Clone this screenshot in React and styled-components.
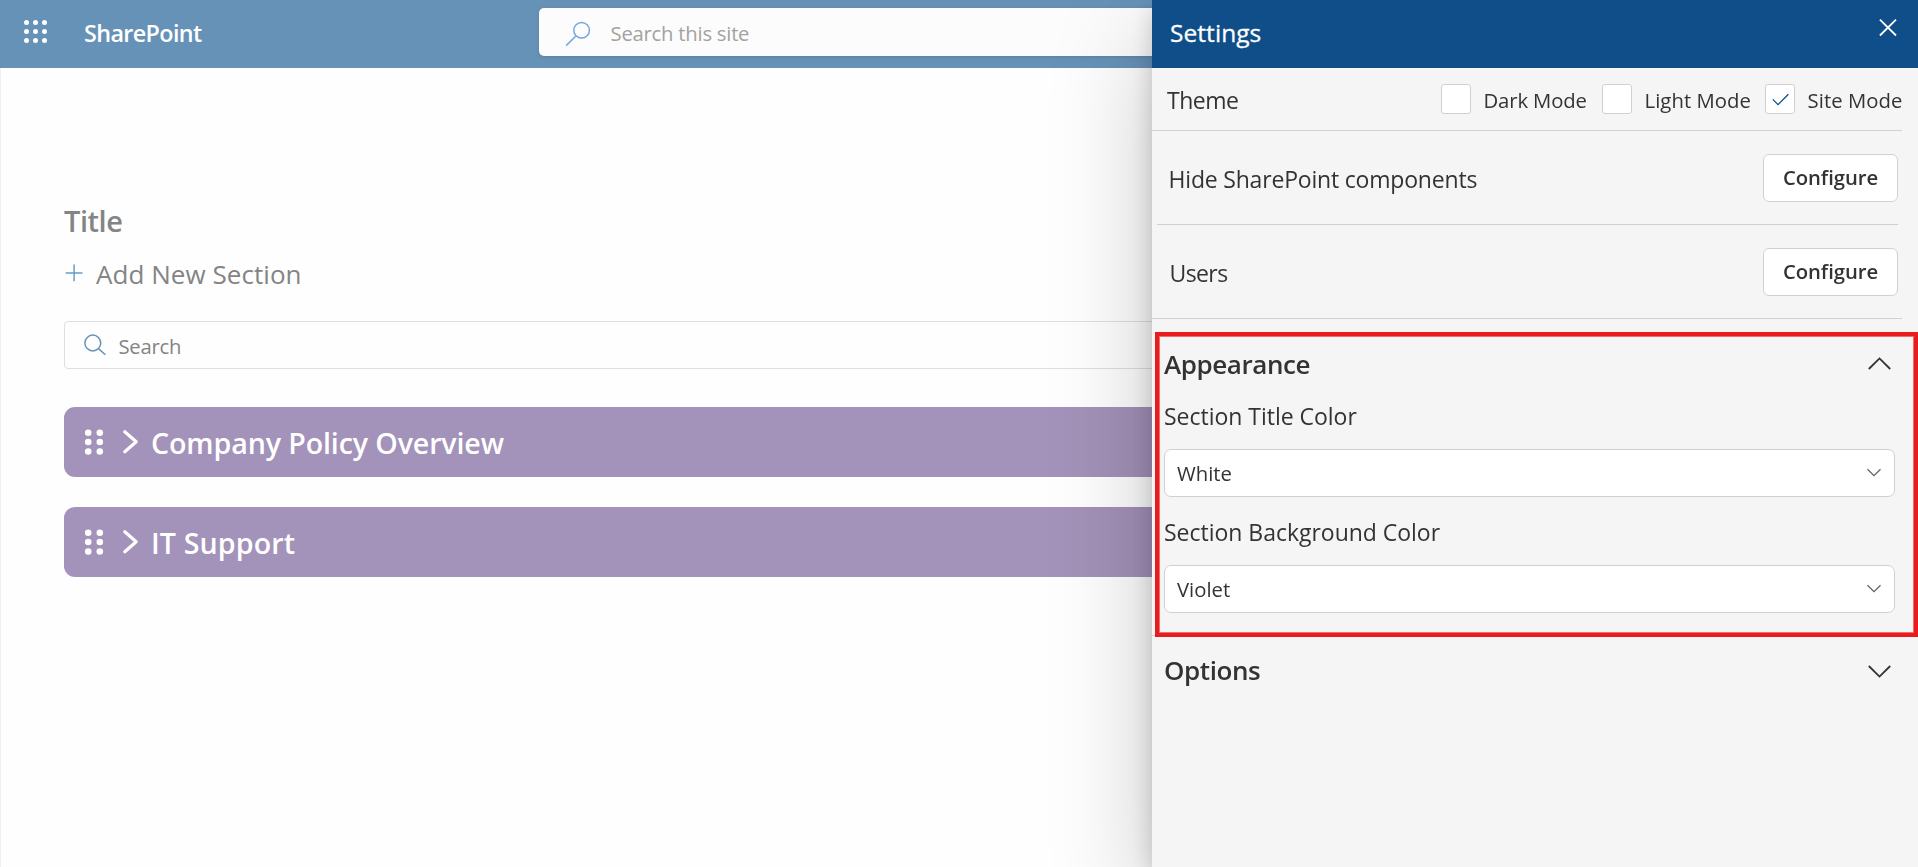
import React from 'react';
import styled, { createGlobalStyle, css } from 'styled-components';

const GlobalStyle = createGlobalStyle`
  * { box-sizing: border-box; }
  html, body { margin: 0; height: 100%; overflow: hidden; background: #fefefe; }
  body { font-family: "Open Sans", "Noto Sans", sans-serif; color: #333; }
  button { font-family: inherit; }
`;

const Page = styled.div`
  display: flex;
  flex-direction: column;
  height: 100vh;
  overflow: hidden;
`;

/* ---------- Suite bar ---------- */

const SuiteBar = styled.header`
  display: grid;
  grid-template-columns: 539px 1fr;
  flex: none;
  height: 68px;
  background: #6792b8;
`;

const Brand = styled.div`
  display: flex;
  align-items: flex-start;
  gap: 37px;
  padding-left: 24px;
`;

const BrandName = styled.span`
  font-size: 23.3px;
  font-weight: 600;
  letter-spacing: -0.6px;
  line-height: 66px;
  color: #fff;
`;

const SiteSearch = styled.div`
  display: flex;
  align-items: flex-start;
  gap: 19.5px;
  height: 48px;
  margin-top: 8px;
  padding-left: 26px;
  border-radius: 5px;
  background: #fcfcfc;
  box-shadow: 0 1px 4px rgba(0, 0, 0, 0.12);
`;

const SiteSearchText = styled.span`
  font-size: 20.3px;
  letter-spacing: -0.24px;
  line-height: 50px;
  color: #a2a2a2;
`;

const Icon = styled.svg`
  flex: none;
  display: block;
  overflow: visible;
  margin-top: ${(p) => p.$top || 0}px;
  fill: none;
  stroke-linecap: ${(p) => (p.$round ? 'round' : 'butt')};
  stroke-linejoin: ${(p) => (p.$round ? 'round' : 'miter')};
`;

/* ---------- Page content ---------- */

const Content = styled.main`
  flex: 1;
  display: flex;
  flex-direction: column;
  padding: 133px 63px 0;
  border-left: 1px solid #f0f0f0;
`;

const PageTitle = styled.h1`
  margin: 0;
  font-size: 29px;
  font-weight: 600;
  letter-spacing: -0.45px;
  line-height: 40px;
  color: #848484;
`;

const AddSection = styled.div`
  display: flex;
  gap: 13px;
  margin-top: 13px;
  padding-left: 1px;
  font-size: 26px;
  letter-spacing: 0.05px;
  line-height: 40px;
  color: #848484;
`;

const FaqSearch = styled.div`
  display: flex;
  align-items: flex-start;
  gap: 12.5px;
  height: 48px;
  margin-top: 27px;
  padding-left: 19px;
  border: 1px solid #dfdfdf;
  border-radius: 4px;
  font-size: 20.3px;
  letter-spacing: -0.26px;
  line-height: 48px;
  color: #848484;
`;

const SectionList = styled.div`
  display: flex;
  flex-direction: column;
  gap: 30px;
  margin-top: 38px;
`;

const SectionBar = styled.div`
  display: flex;
  align-items: flex-start;
  height: 70px;
  padding-left: 20px;
  border-radius: 11px;
  background: #a392b9;
`;

const SectionName = styled.span`
  margin-left: 13px;
  font-size: 28.6px;
  font-weight: 600;
  letter-spacing: ${(p) => p.$tracking}px;
  line-height: 72px;
  color: #fff;
`;

/* ---------- Settings panel ---------- */

const Panel = styled.aside`
  position: fixed;
  top: 0;
  right: 0;
  width: 766px;
  height: 100vh;
  background: #f5f5f5;
  box-shadow: 0 38.4px 96px rgba(0, 0, 0, 0.22), 0 7.2px 21.6px rgba(0, 0, 0, 0.18);
`;

const PanelHeader = styled.div`
  display: flex;
  justify-content: space-between;
  align-items: flex-start;
  height: 68px;
  padding: 0 21px 0 18px;
  background: #0f4e89;
`;

const PanelTitle = styled.h2`
  margin: 0;
  font-size: 24.5px;
  font-weight: 400;
  letter-spacing: 0.06px;
  line-height: 65px;
  color: #fff;
  -webkit-text-stroke: 0.3px #fff;
`;

const ThemeRow = styled.div`
  display: flex;
  align-items: center;
  height: 63px;
  margin-right: 16px;
  padding-left: 15px;
  border-bottom: 1px solid #d1d1d1;
`;

const RowLabel = styled.span`
  font-size: 23px;
  letter-spacing: ${(p) => p.$tracking}px;
  line-height: 50px;
`;

const ThemeLabel = styled(RowLabel)`
  padding-top: 1px;
`;

const ThemeOptions = styled.div`
  display: grid;
  grid-template-columns: 161px 163px 137px;
  margin-left: auto;
`;

const ThemeOption = styled.label`
  display: flex;
  align-items: center;
  gap: 12.5px;
  font-size: 20.3px;
  letter-spacing: ${(p) => p.$tracking}px;
  line-height: 30px;
  white-space: nowrap;

  span { padding-top: 2px; }
`;

const Checkbox = styled.span`
  && { padding: 0; }
  flex: none;
  width: 30px;
  height: 30px;
  border: 1px solid #d0d0d0;
  border-radius: 3px;
  background: #fff;
`;

const ConfigRow = styled.div`
  display: flex;
  justify-content: space-between;
  align-items: flex-start;
  height: 94px;
  padding-top: 23px;
  border-bottom: 1px solid #d0d0d0;
  ${(p) =>
    p.$inset
      ? css`margin: 0 20px 0 5px; padding-left: 11.5px;`
      : css`margin-right: 16px; padding-left: 17.5px; padding-right: 4px;`}
`;

const ConfigureButton = styled.button`
  width: 135px;
  height: 48px;
  padding: 0 0 2px;
  border: 1px solid #d0d0d0;
  border-radius: 6px;
  background: #fff;
  color: #333;
  font-size: 20.3px;
  font-weight: 600;
  letter-spacing: -0.06px;
  line-height: 44px;
`;

const Group = styled.section`
  position: relative;
  margin-right: 16px;
  padding: ${(p) => (p.$open ? '25px 7px 22px 12px' : '14px 7px 0 12px')};
  border-bottom: ${(p) => (p.$open ? '1px solid #d0d0d0' : '0')};
`;

const GroupHeader = styled.div`
  display: flex;
  justify-content: space-between;
  height: 40px;
  padding-right: 4px;
`;

const GroupTitle = styled.h3`
  margin: 0;
  font-size: 26px;
  font-weight: 600;
  letter-spacing: -0.42px;
  line-height: 40px;
`;

const Field = styled.div`
  & + & { margin-top: 15px; }
`;

const Fields = styled.div`
  padding-top: 12px;
`;

const FieldLabel = styled.div`
  font-size: 23px;
  letter-spacing: -0.02px;
  line-height: 40px;
`;

const Select = styled.div`
  display: flex;
  justify-content: space-between;
  height: 48px;
  margin-top: 13px;
  padding: 0 13.5px 0 12px;
  border: 1px solid #d0d0d0;
  border-radius: 7px;
  background: #fff;
  font-size: 20.3px;
  line-height: 46px;
`;

const Highlight = styled.div`
  position: absolute;
  inset: 13px -16px -2px 3px;
  border: 4px solid #e81c1c;
  box-shadow: inset 0 0 0 1px #ef6e6e;
  pointer-events: none;
`;

const WaffleIcon = () => (
  <Icon $top={19} width="23" height="24" viewBox="0 0 23 24">
    {[3.4, 12.4, 21.4].map((y) =>
      [2.5, 11.5, 20.5].map((x) => <circle key={`${x}-${y}`} cx={x} cy={y} r="2.5" fill="#fff" />)
    )}
  </Icon>
);

const DragIcon = () => (
  <Icon $top={22} width="20" height="26" viewBox="0 0 20 26">
    {[3.7, 13, 22.5].map((y) =>
      [4.2, 15.8].map((x) => <circle key={`${x}-${y}`} cx={x} cy={y} r="3.3" fill="#fff" />)
    )}
  </Icon>
);

const Chevron = ({ up }) => (
  <Icon $top={up ? 13 : 15} width="23" height="13" viewBox="0 0 23 13" stroke="#333" strokeWidth="1.8">
    <path d={up ? 'M0.8 12 11.5 1.4 22.2 12' : 'M0.8 1 11.5 11.6 22.2 1'} />
  </Icon>
);

const SelectField = ({ label, value }) => (
  <Field>
    <FieldLabel>{label}</FieldLabel>
    <Select>
      <span>{value}</span>
      <Icon $top={19} width="14" height="8" viewBox="0 0 14 8" stroke="#606060" strokeWidth="1.2">
        <path d="M0.5 0.2 7 6.6 13.5 0.2" />
      </Icon>
    </Select>
  </Field>
);

const ThemeChoice = ({ label, checked, tracking }) => (
  <ThemeOption $tracking={tracking}>
    <Checkbox>
      {checked && (
        <Icon width="28" height="28" viewBox="0 0 28 28" stroke="#0f4e89" strokeWidth="1.3">
          <path d="M6.8 14.4 12 19.6 22.4 9.2" />
        </Icon>
      )}
    </Checkbox>
    <span>{label}</span>
  </ThemeOption>
);

const sections = [
  { name: 'Company Policy Overview', tracking: -0.12 },
  { name: 'IT Support', tracking: 0.13 },
];

export default function App() {
  return (
    <Page>
      <GlobalStyle />
      <SuiteBar>
        <Brand>
          <WaffleIcon />
          <BrandName>SharePoint</BrandName>
        </Brand>
        <SiteSearch>
          <Icon $top={13} width="26" height="26" viewBox="0 0 26 26" stroke="#72a8dd" strokeWidth="1.5">
            <circle cx="16.6" cy="9.2" r="7.8" />
            <path d="M11.1 14.8 1.2 24.6" />
          </Icon>
          <SiteSearchText>Search this site</SiteSearchText>
        </SiteSearch>
      </SuiteBar>

      <Content>
        <PageTitle>Title</PageTitle>
        <AddSection>
          <Icon $top={10} width="18" height="18" viewBox="0 0 18 18" stroke="#6b9ac4" strokeWidth="1.5">
            <path d="M0.7 9H17.5M9.1 0.5V17.2" />
          </Icon>
          <span>Add New Section</span>
        </AddSection>
        <FaqSearch>
          <Icon $top={12} width="22" height="22" viewBox="0 0 22 22" stroke="#6792b8" strokeWidth="1.5">
            <circle cx="8.8" cy="9" r="7.9" />
            <path d="M14.4 14.6 21.4 20.8" />
          </Icon>
          <span>Search</span>
        </FaqSearch>
        <SectionList>
          {sections.map((s) => (
            <SectionBar key={s.name}>
              <DragIcon />
              <Icon
                $round
                $top={22}
                width="34"
                height="26"
                viewBox="0 0 34 26"
                stroke="#fff"
                strokeWidth="3.2"
              >
                <path d="M20.8 2.8 32.2 12.8 20.8 22.8" />
              </Icon>
              <SectionName $tracking={s.tracking}>{s.name}</SectionName>
            </SectionBar>
          ))}
        </SectionList>
      </Content>

      <Panel>
        <PanelHeader>
          <PanelTitle>Settings</PanelTitle>
          <Icon $top={19} width="18" height="17" viewBox="0 0 18 17" stroke="#fff" strokeWidth="1.8">
            <path d="M0.9 0.6 17 16.5M17 0.6 0.9 16.5" />
          </Icon>
        </PanelHeader>

        <ThemeRow>
          <ThemeLabel $tracking={-0.5}>Theme</ThemeLabel>
          <ThemeOptions>
            <ThemeChoice label="Dark Mode" tracking={-0.13} />
            <ThemeChoice label="Light Mode" tracking={0.06} />
            <ThemeChoice label="Site Mode" tracking={0.07} checked />
          </ThemeOptions>
        </ThemeRow>

        <ConfigRow $inset>
          <RowLabel $tracking={-0.19}>Hide SharePoint components</RowLabel>
          <ConfigureButton>Configure</ConfigureButton>
        </ConfigRow>
        <ConfigRow>
          <RowLabel $tracking={-0.6}>Users</RowLabel>
          <ConfigureButton>Configure</ConfigureButton>
        </ConfigRow>

        <Group $open>
          <GroupHeader>
            <GroupTitle>Appearance</GroupTitle>
            <Chevron up />
          </GroupHeader>
          <Fields>
            <SelectField label="Section Title Color" value="White" />
            <SelectField label="Section Background Color" value="Violet" />
          </Fields>
          <Highlight />
        </Group>

        <Group>
          <GroupHeader>
            <GroupTitle>Options</GroupTitle>
            <Chevron />
          </GroupHeader>
        </Group>
      </Panel>
    </Page>
  );
}
